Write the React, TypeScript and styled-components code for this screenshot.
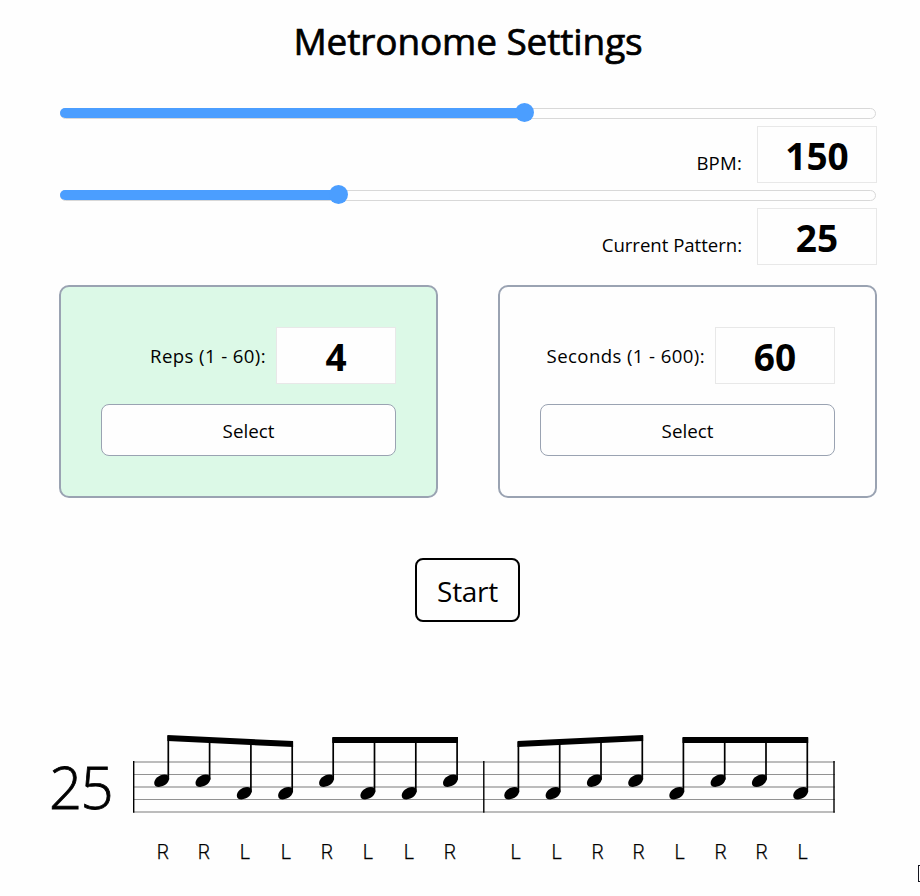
import React from "react";
import styled, { createGlobalStyle } from "styled-components";

const GlobalStyle = createGlobalStyle`
  *, *::before, *::after { box-sizing: border-box; }
  html, body { margin: 0; padding: 0; background: #fefefe; overflow: hidden; }
  body { font-family: "Segoe UI", "Open Sans", "Noto Sans", sans-serif; color: #000; }
`;

const Page = styled.main`
  position: relative;
  width: 920px;
  height: 896px;
  overflow: hidden;
  background: #fefefe;
`;

const Settings = styled.section`
  display: flex;
  flex-direction: column;
  width: 818px;
  margin-left: 59px;
`;

const Title = styled.h1`
  margin: 0;
  height: 103.5px;
  padding-top: 16px;
  text-align: center;
  font-size: 37px;
  line-height: 50px;
  font-weight: 500;
  -webkit-text-stroke: 0.7px #000;
  letter-spacing: -0.12px;
`;

const Control = styled.div`
  display: flex;
  flex-direction: column;
  height: 82px;
`;

const Slider = styled.div`
  display: flex;
  align-items: center;
  height: 19px;
  padding: 0 1px;
`;

const Track = styled.div`
  position: relative;
  flex: 1;
  height: 11px;
  border: 1.5px solid #d8d8d8;
  border-radius: 5.5px;
`;

const Fill = styled.div`
  height: 10px;
  margin: -0.5px 0 0 -1px;
  border-radius: 5px;
  background: #4b9eff;
`;

const Thumb = styled.div`
  position: absolute;
  top: -5.5px;
  width: 19px;
  height: 19px;
  margin-left: -10px;
  border-radius: 50%;
  background: #4b9eff;
`;

const Field = styled.label<{ $gap: number }>`
  display: flex;
  justify-content: flex-end;
  align-items: center;
  gap: ${(p) => p.$gap}px;
`;

const ControlField = styled(Field)`
  margin-top: 3.5px;
`;

const FieldText = styled.span<{ $spacing: number; $drop: number }>`
  font-size: 18.6px;
  line-height: 26px;
  white-space: nowrap;
  letter-spacing: ${(p) => p.$spacing}px;
  padding-top: ${(p) => p.$drop}px;
`;

const NumberBox = styled.span`
  display: block;
  width: 120px;
  height: 57px;
  border: 1px solid #e8e8e8;
  background: #fefefe;
  text-align: center;
  font-size: 37px;
  line-height: 57px;
  font-weight: 700;
`;

const Modes = styled.div`
  display: grid;
  grid-template-columns: 379px 379px;
  gap: 60px;
  margin-top: 17.5px;
`;

const Card = styled.div<{ $selected?: boolean }>`
  display: flex;
  flex-direction: column;
  gap: 20px;
  height: 213px;
  padding: 40px;
  border: 2px solid #9aa3b2;
  border-radius: 10px;
  background: ${(p) => (p.$selected ? "#dcf9e7" : "#fefefe")};
`;

const SelectButton = styled.button`
  height: 52px;
  padding: 1px 0 0;
  border: 1px solid #9aa3b2;
  border-radius: 8px;
  background: #fefefe;
  color: #000;
  font-family: inherit;
  font-size: 18.8px;
  line-height: 26px;
`;

const StartButton = styled.button`
  align-self: center;
  width: 105px;
  height: 64px;
  margin: 60px 1px 0 0;
  padding: 2px 0 0;
  border: 2px solid #000;
  border-radius: 8px;
  background: #fefefe;
  color: #000;
  font-family: inherit;
  font-size: 28px;
  line-height: 40px;
  letter-spacing: -0.3px;
`;

const Exercise = styled.section`
  display: flex;
  margin-top: 108px;
  padding-left: 49px;
`;

const ExerciseNumber = styled.div`
  width: 81px;
  padding-top: 17px;
  font-size: 58px;
  line-height: 80px;
  font-weight: 300;
  -webkit-text-stroke: 0.8px #000;
  letter-spacing: -1.5px;
`;

const Notation = styled.div`
  display: flex;
  flex-direction: column;
  width: 710px;
`;

const Staff = styled.svg`
  display: block;
`;

const Sticking = styled.div`
  display: flex;
  gap: 24.6px;
  margin-top: 20px;
  padding-left: 12.5px;
`;

const StickingBar = styled.div`
  display: grid;
  grid-template-columns: repeat(8, 41px);
`;

const Stroke = styled.span`
  text-align: center;
  font-family: Roboto, "Liberation Sans", sans-serif;
  font-size: 19.5px;
  line-height: 26px;
  font-weight: 300;
  -webkit-text-stroke: 0.25px #000;
`;

const PointerEdge = styled.div`
  position: absolute;
  left: 918px;
  top: 865px;
  width: 6px;
  height: 17px;
  border: 1px solid #15151f;
`;

type Group = { x: number; strokes: string; left: number; right: number };

const groups: Group[] = [
  { x: 168.3, strokes: "RRLL", left: 735, right: 741 },
  { x: 333.2, strokes: "RLLR", left: 737, right: 737 },
  { x: 518.4, strokes: "LLRR", left: 741, right: 735 },
  { x: 683.4, strokes: "LRRL", left: 737, right: 737 },
];

const STEP = 41.3;
const BEAM = 6;

function BeamedGroup({ x, strokes, left, right }: Group) {
  const end = x + STEP * 3;
  return (
    <g>
      {strokes.split("").map((s, i) => {
        const sx = x + STEP * i;
        const y = s === "R" ? 780.7 : 793.2;
        const top = left + ((right - left) * i) / 3 + 1;
        return (
          <g key={i}>
            <path d={`M${sx} ${top}V${y - 1}`} stroke="#000" strokeWidth="1.7" />
            <path
              transform={`translate(${sx - 6.7} ${y})`}
              d="M-7.4 2.3C-7.4 -1.6 -2.5 -6.2 2.9 -6.2C5.9 -6.2 7.5 -4.7 7.5 -2.1C7.5 2 2.6 6.2 -2.7 6.2C-5.8 6.2 -7.4 4.8 -7.4 2.3Z"
            />
          </g>
        );
      })}
      <path
        d={`M${x - 0.9} ${left}L${end + 0.9} ${right}V${right + BEAM}L${x - 0.9} ${left + BEAM}Z`}
      />
    </g>
  );
}

function StaffDrawing() {
  return (
    <Staff width="710" height="90" viewBox="130 730 710 90">
      {[761, 786, 811].map((y) => (
        <rect key={y} x="133" y={y} width="702" height="2" fill="#bcbcbc" />
      ))}
      {[774, 799].map((y) => (
        <rect key={y} x="133" y={y} width="702" height="1" fill="#929292" />
      ))}
      {[133, 483.1, 833.3].map((x) => (
        <rect key={x} x={x} y="761" width="1.4" height="51.7" />
      ))}
      {groups.map((g) => (
        <BeamedGroup key={g.x} {...g} />
      ))}
    </Staff>
  );
}

function SettingControl(props: { label: string; value: number; percent: number; spacing: number }) {
  return (
    <Control>
      <Slider>
        <Track>
          <Fill style={{ width: `${props.percent}%` }} />
          <Thumb style={{ left: `${props.percent}%` }} />
        </Track>
      </Slider>
      <ControlField $gap={15}>
        <FieldText $spacing={props.spacing} $drop={17}>{props.label}</FieldText>
        <NumberBox>{props.value}</NumberBox>
      </ControlField>
    </Control>
  );
}

function ModeCard(props: { label: string; value: number; selected?: boolean; spacing: number }) {
  return (
    <Card $selected={props.selected}>
      <Field $gap={10}>
        <FieldText $spacing={props.spacing} $drop={0}>{props.label}</FieldText>
        <NumberBox>{props.value}</NumberBox>
      </Field>
      <SelectButton>Select</SelectButton>
    </Card>
  );
}

export default function App() {
  return (
    <Page>
      <GlobalStyle />
      <Settings>
        <Title>Metronome Settings</Title>
        <SettingControl label="BPM:" value={150} percent={57} spacing={0.2} />
        <SettingControl label="Current Pattern:" value={25} percent={34.2} spacing={-0.03} />
        <Modes>
          <ModeCard label="Reps (1 - 60):" value={4} selected spacing={0.4} />
          <ModeCard label="Seconds (1 - 600):" value={60} spacing={0.4} />
        </Modes>
        <StartButton>Start</StartButton>
      </Settings>
      <Exercise>
        <ExerciseNumber>25</ExerciseNumber>
        <Notation>
          <StaffDrawing />
          <Sticking>
            {["RRLLRLLR", "LLRRLRRL"].map((bar) => (
              <StickingBar key={bar}>
                {bar.split("").map((s, i) => (
                  <Stroke key={i}>{s}</Stroke>
                ))}
              </StickingBar>
            ))}
          </Sticking>
        </Notation>
      </Exercise>
      <PointerEdge />
    </Page>
  );
}
